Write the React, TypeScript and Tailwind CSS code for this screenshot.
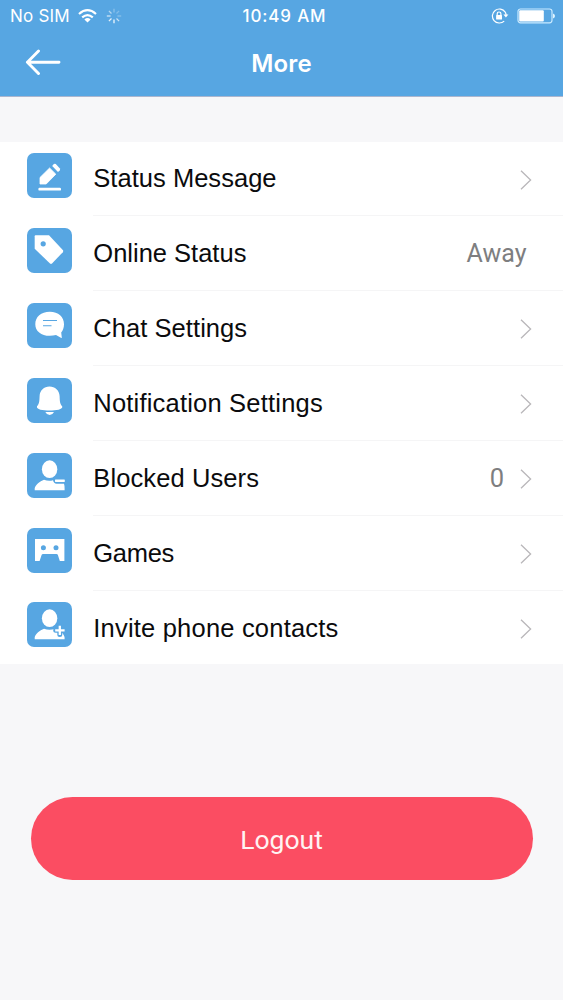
import type { ReactNode } from "react";

const BLUE = "#57a6e2";

function Tile({ children }: { children: ReactNode }) {
  return (
    <svg className="mt-[12px] h-[45px] w-[45px] shrink-0 self-start rounded-[7px] bg-[#57a6e2] in-[li:first-child]:mt-[11px] in-[li:last-child]:mt-[11.5px]" viewBox="0 0 45 45" fill="white">
      {children}
    </svg>
  );
}

const pencil = (
  <>
    <path d="M13 24.5 L22.6 15 L28.8 21.2 L19.2 31 H13 Z" strokeLinejoin="round" stroke="white" strokeWidth=".8" />
    <path d="M25.2 12.9 L26.8 11.1 Q27.8 10.4 28.8 11.1 L32.9 15.4 Q33.4 16.4 32.7 17.4 L31 19 Z" />
    <rect x="11.4" y="34.8" width="22.6" height="2.8" rx="1.2" />
  </>
);

const tag = (
  <>
    <path d="M8.5 7.3 H22 L36 22.2 Q36.6 23.3 35.8 24.2 L25 35.6 Q24 36.5 23 35.6 L7.7 20.7 V8.2 Q7.7 7.3 8.5 7.3 Z" />
    <circle cx="16.2" cy="15.8" r="2.6" fill={BLUE} />
  </>
);

const chat = (
  <>
    <path d="M22.8 8.8 C31.5 8.8 37 14 37 21.2 C37 24.8 35.8 27.5 34.2 29.5 L34.8 34.4 Q34.7 35.2 33.9 34.8 L29 32 C27 32.6 25 32.8 22.8 32.8 C14 32.8 8.3 28 8.3 21.2 C8.3 14 14 8.8 22.8 8.8 Z" />
    <path d="M16 17.5 H30 M16 22.8 H24.5" stroke={BLUE} strokeWidth="1.1" />
  </>
);

const bell = (
  <>
    <path d="M22.5 8.4 C28 8.4 32.4 12.2 32.6 18 C32.8 24 33 26 35.2 28.2 C36.2 31.5 29 32.5 22.5 32.5 C16 32.5 9 31.5 10 28.2 C12.2 26 12.4 24 12.6 18 C12.8 12.2 17 8.4 22.5 8.4 Z" />
    <path d="M18.3 34 H27 Q25.5 37 22.7 37 Q19.8 37 18.3 34 Z" />
  </>
);

const person = (
  <>
    <ellipse cx="22.6" cy="16.2" rx="7.7" ry="8.9" />
    <path d="M7.7 37.3 V35.3 C8.5 31.5 12.8 28.3 17 26.7 Q22.6 28.8 28 26.7 C32.8 28 37 31.5 37.6 35.4 V37.3 Z" />
  </>
);

const blocked = (
  <>
    <ellipse cx="22.6" cy="16.2" rx="7.7" ry="8.9" />
    <path d="M7.7 37.3 V35.3 C8.5 31.5 12.8 28.3 17 26.7 Q21.5 28.5 26 27.2 Q26.8 30.5 29.5 30.8 H37 Q37.6 32.5 37.6 35.4 V37.3 Z" />
    <rect x="28" y="26.6" width="9.8" height="2.3" rx=".4" />
  </>
);

const games = (
  <>
    <path d="M8 11 H37.4 V33 H32.8 L30.8 26.8 Q30.4 26 29.5 26 H16 Q15.1 26 14.7 26.8 L12.6 33 H8 Z" />
    <circle cx="16.4" cy="19.8" r="2.5" fill={BLUE} />
    <circle cx="29" cy="19.8" r="2.5" fill={BLUE} />
  </>
);

const invite = (
  <>
    {person}
    <path d="M32.8 24.6 V32.6 M28.7 28.3 H37" stroke={BLUE} strokeWidth="5" strokeLinecap="round" />
    <path d="M32.8 23.7 V33 M28.2 28.3 H37.6" stroke="white" strokeWidth="2.3" />
  </>
);

interface Item {
  label: string;
  icon: ReactNode;
  tracking: string;
  value?: string;
  arrow: boolean;
}

const items: Item[] = [
  { label: "Status Message", icon: pencil, tracking: "tracking-[0.03px]", arrow: true },
  { label: "Online Status", icon: tag, tracking: "tracking-[0px]", value: "Away", arrow: false },
  { label: "Chat Settings", icon: chat, tracking: "tracking-[0.06px]", arrow: true },
  { label: "Notification Settings", icon: bell, tracking: "tracking-[0.2px]", arrow: true },
  { label: "Blocked Users", icon: blocked, tracking: "tracking-[0.1px]", value: "0", arrow: true },
  { label: "Games", icon: games, tracking: "tracking-[-0.3px]", arrow: true },
  { label: "Invite phone contacts", icon: invite, tracking: "tracking-[0.2px]", arrow: true },
];

function Chevron() {
  return (
    <svg className="ml-[16px] mr-[31px] mt-[2px] h-[20px] w-[12px] shrink-0" viewBox="0 0 12 20" fill="none" stroke="#b9b7ba" strokeWidth="1.3">
      <path d="M1 .8 L10.6 10 L1 19.2" />
    </svg>
  );
}

function Row({ item }: { item: Item }) {
  return (
    <li className="flex h-[74.9px] pl-[27px] first:h-[74.2px] last:h-[73.8px]">
      <Tile>{item.icon}</Tile>
      <div className="ml-[20.5px] flex flex-1 items-center border-b border-[#f5f5f6] in-[li:last-child]:border-b-0">
        <span className={`flex-1 whitespace-nowrap pl-[0.8px] text-[25.5px] leading-[30px] text-[#0b0b0d] in-[li:first-child]:-mt-[1px] ${item.tracking}`}>
          {item.label}
        </span>
        {item.value && (
          <span className={`font-[Roboto] leading-[30px] text-[#7e7e80] ${item.arrow ? "mt-[1px] text-[25.5px]" : "mr-[36.5px] mt-[2px] text-[25px]"}`}>
            {item.value}
          </span>
        )}
        {item.arrow && <Chevron />}
      </div>
    </li>
  );
}

function StatusBar() {
  return (
    <div className="grid h-[32px] grid-cols-3 items-center pl-[10px] pr-[8px] font-[Inter]">
      <div className="flex items-center">
        <span className="whitespace-nowrap text-[17px] leading-[20px] tracking-[0.2px]">No SIM</span>
        <svg className="ml-[8px] h-[14px] w-[19px]" viewBox="0 0 19 14" fill="none" stroke="white" strokeWidth="2.2">
          <path d="M1 5 Q9.5 -2.6 18 5" />
          <path d="M4.2 8.4 Q9.5 3.8 14.8 8.4" />
          <path d="M6.4 10.4 Q9.5 7.8 12.6 10.4 L9.5 13.5 Z" fill="white" stroke="none" />
        </svg>
        <svg className="ml-[9px] h-[16px] w-[16px]" viewBox="0 0 16 16" stroke="white" strokeWidth="1.3">
          <path d="M8 .8 V4.6" opacity=".3" />
          <path d="M13.1 2.9 L10.5 5.5" opacity=".25" />
          <path d="M15.2 8 H11.4" opacity=".3" />
          <path d="M13.1 13.1 L10.5 10.5" opacity=".7" />
          <path d="M8 15.2 V11.4" opacity=".9" />
          <path d="M2.9 13.1 L5.5 10.5" opacity=".85" />
          <path d="M.8 8 H4.6" opacity=".7" />
          <path d="M2.9 2.9 L5.5 5.5" opacity=".55" />
        </svg>
      </div>
      <span className="whitespace-nowrap pl-[4px] text-center text-[17px] font-medium leading-[20px] tracking-[0.85px]">10:49 AM</span>
      <div className="flex items-center justify-end">
        <svg className="h-[16px] w-[18px]" viewBox="0 0 18 16" fill="none" stroke="white">
          <path d="M14.2 4.1 A7 7 0 1 0 13.2 13.1" strokeWidth="1.2" />
          <path d="M14.2 4.1 Q15 5.5 15.1 7" strokeWidth="1.2" />
          <path d="M12.4 6.5 H17.4 L14.9 9.5 Z" fill="white" stroke="none" />
          <rect x="5.1" y="7" width="5.9" height="4.6" rx=".5" fill="white" stroke="none" />
          <path d="M6.2 7.3 V5.7 Q6.2 4 8 4 Q9.9 4 9.9 5.7 V7.3" strokeWidth="1.2" />
        </svg>
        <svg className="ml-[8px] h-[16px] w-[38px]" viewBox="0 0 38 16">
          <rect x="1" y="1" width="34" height="13.8" rx="2.5" fill="none" stroke="#c9eaff" strokeWidth="1.2" />
          <rect x="2.2" y="2.2" width="24.6" height="11.4" rx="1" fill="white" />
          <path d="M36 5.5 Q38 6.2 38 8 Q38 9.8 36 10.4 Z" fill="#dff4ff" />
        </svg>
      </div>
    </div>
  );
}

export default function App() {
  return (
    <main className="flex h-[1000px] w-[563px] flex-col overflow-hidden bg-[#f7f7f9] font-['Liberation_Sans',Arial,sans-serif]">
      <header className="h-[97px] shrink-0 border-b border-[#aab6cf] bg-[#57a6e2] text-white">
        <StatusBar />
        <div className="grid h-[62px] grid-cols-[80px_1fr_80px] items-center">
          <button className="-mt-[2px] flex pl-[25px]" aria-label="Back">
            <svg className="h-[27px] w-[36px]" viewBox="0 0 36 27" fill="none" stroke="white" strokeWidth="2.9" strokeLinecap="round" strokeLinejoin="round">
              <path d="M13.5 2 L2.4 13.2 L13.5 24.5 M2.4 13.2 H34" />
            </svg>
          </button>
          <h1 className="pt-[1px] text-center font-[Inter] text-[24px] font-semibold leading-[30px] tracking-[0.2px]">More</h1>
        </div>
      </header>
      <ul className="mt-[45px] shrink-0 bg-white">
        {items.map((item) => (
          <Row key={item.label} item={item} />
        ))}
      </ul>
      <button className="ml-[30.5px] mt-[133px] h-[83px] w-[502px] shrink-0 rounded-full bg-[#fb4d62] pt-[2px] font-[Roboto] text-[26.5px] font-normal text-[#fff3f3]">
        Logout
      </button>
    </main>
  );
}
